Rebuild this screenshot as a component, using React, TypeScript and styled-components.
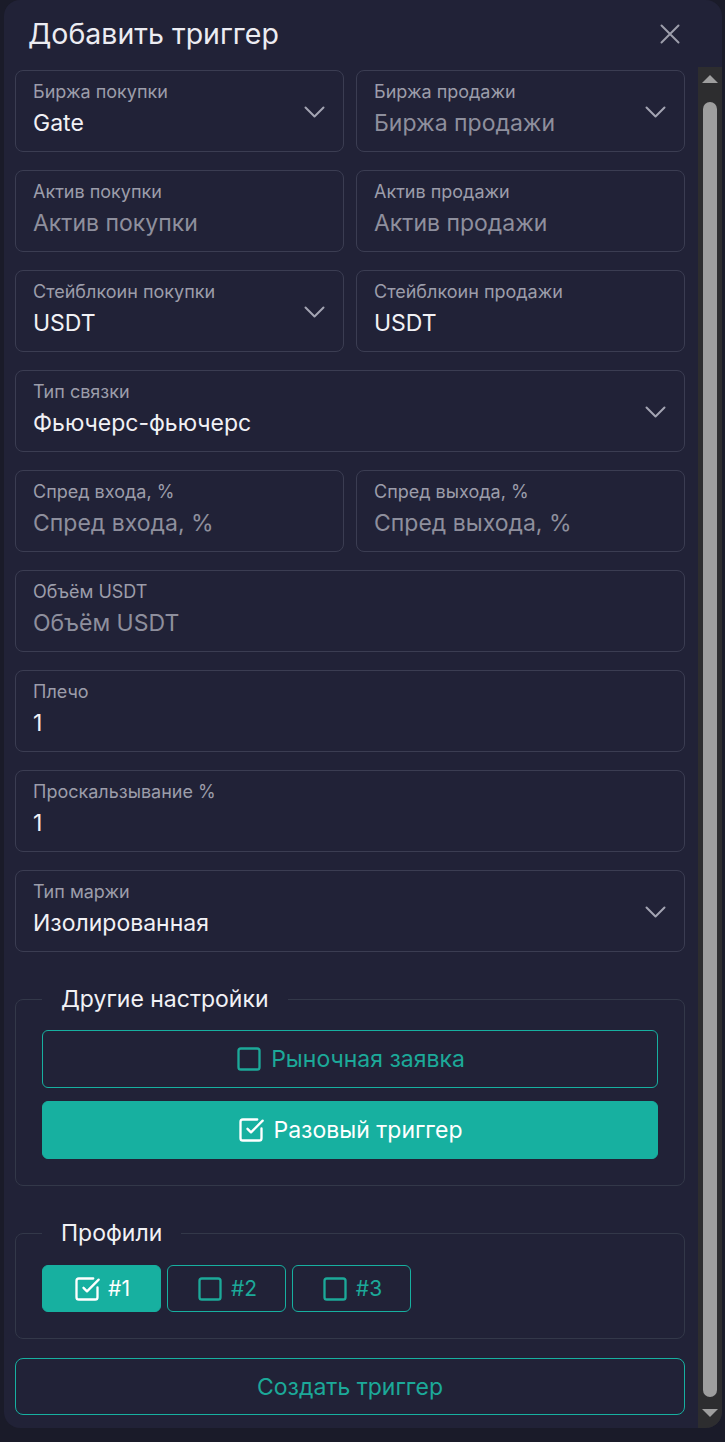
import React from 'react';
import styled, { createGlobalStyle } from 'styled-components';
import { Square, SquareCheckBig } from 'lucide-react';

const GlobalStyle = createGlobalStyle`
  html, body {
    margin: 0;
    padding: 0;
    background-color: #1a1b29;
    font-family: Inter, "Noto Sans", sans-serif;
  }
  * {
    box-sizing: border-box;
  }
`;

const teal = '#17b0a0';
const tealText = '#1ca999';
const barGray = '#9e9e9e';

const Modal = styled.div`
  margin-left: 4px;
  width: 718px;
  height: 1428px;
  background-color: #212237;
  border-radius: 16px;
  display: flex;
  flex-direction: column;
  overflow: hidden;
`;

const Header = styled.div`
  height: 67px;
  flex-shrink: 0;
  display: flex;
  align-items: center;
  justify-content: space-between;
  padding: 0 42px 0 24px;
`;

const Title = styled.h2`
  margin: 0;
  font-size: 28.5px;
  font-weight: 400;
  color: #ececf2;
`;

const CloseButton = styled.button`
  border: none;
  background: transparent;
  padding: 0;
  width: 20px;
  height: 20px;
  display: flex;
  align-items: center;
  justify-content: center;
  cursor: pointer;
`;

const Body = styled.div`
  flex: 1;
  min-height: 0;
  display: flex;
`;

const Content = styled.div`
  flex: 1;
  min-width: 0;
  overflow: hidden;
  padding: 3px 13px 44px 11px;
`;

/* scrollbar column drawn by hand: the headless browser hides native bars */
const ScrollTrack = styled.div`
  width: 24px;
  flex-shrink: 0;
  background-color: #2d2d2f;
  display: flex;
  flex-direction: column;
  align-items: center;
  padding: 8px 0 11px;
`;

const Arrow = styled.div<{ $down?: boolean }>`
  width: 0;
  height: 0;
  border-left: 8px solid transparent;
  border-right: 8px solid transparent;
  ${(p) =>
    p.$down
      ? `border-top: 8px solid ${barGray};`
      : `border-bottom: 8px solid ${barGray};`}
`;

const Thumb = styled.div`
  flex: 1;
  width: 14px;
  margin: 19px 0 12px;
  border-radius: 7px;
  background-color: ${barGray};
`;

const FieldGrid = styled.div`
  display: grid;
  grid-template-columns: 1fr 1fr;
  column-gap: 12px;
  row-gap: 18px;
`;

const Field = styled.div<{ $wide?: boolean }>`
  position: relative;
  grid-column: ${(p) => (p.$wide ? 'span 2' : 'auto')};
  height: 82px;
  border: 1px solid #3b3d52;
  border-radius: 8px;
  padding: 10px 17px 0 17px;
  display: flex;
  flex-direction: column;
  gap: 6px;
`;

const Label = styled.div`
  font-size: 18px;
  line-height: 22px;
  color: #9c9daa;
`;

const Value = styled.div<{ $placeholder?: boolean }>`
  font-size: 23px;
  line-height: 28px;
  color: ${(p) => (p.$placeholder ? '#8e8f9d' : '#f1f1f5')};
`;

const Chevron = styled.svg`
  position: absolute;
  right: 18px;
  top: 35px;
`;

const Group = styled.fieldset`
  margin: 33px 0 0 0;
  padding: 0 26px;
  min-inline-size: 0;
  border: 1px solid #333849;
  border-radius: 8px;
`;

const GroupTitle = styled.legend`
  padding: 0 19px;
  font-size: 23px;
  line-height: 28px;
  color: #f1f1f5;
`;

const OptionList = styled.div`
  display: flex;
  flex-direction: column;
  gap: 13px;
  padding: 17px 0 26px;
`;

const ProfileRow = styled.div`
  display: flex;
  gap: 6px;
  padding: 18px 0 26px;
`;

const ToggleButton = styled.button<{ $active?: boolean; $small?: boolean }>`
  height: ${(p) => (p.$small ? '47px' : '58px')};
  width: ${(p) => (p.$small ? '119px' : '100%')};
  border-radius: 6px;
  border: 1px solid ${teal};
  background-color: ${(p) => (p.$active ? teal : 'transparent')};
  color: ${(p) => (p.$active ? '#ffffff' : tealText)};
  font-family: inherit;
  font-size: ${(p) => (p.$small ? '21px' : '23px')};
  display: flex;
  align-items: center;
  justify-content: center;
  gap: ${(p) => (p.$small ? '7px' : '8px')};
  padding: 0;
  cursor: pointer;
`;

const SubmitButton = styled.button`
  margin-top: 19px;
  width: 100%;
  height: 57px;
  border: 1px solid ${teal};
  border-radius: 8px;
  background: transparent;
  color: ${tealText};
  font-family: inherit;
  font-size: 23px;
  cursor: pointer;
`;

const ChevronIcon = () => (
  <Chevron width="21" height="13" viewBox="0 0 21 13" fill="none">
    <polyline points="1.5,1.5 10.5,10.5 19.5,1.5" stroke="#a3a4b2" strokeWidth="2" strokeLinecap="round" strokeLinejoin="round" />
  </Chevron>
);

type FieldDef = {
  label: string;
  value: string;
  placeholder?: boolean;
  select?: boolean;
  wide?: boolean;
};

const fields: FieldDef[] = [
  { label: 'Биржа покупки', value: 'Gate', select: true },
  { label: 'Биржа продажи', value: 'Биржа продажи', placeholder: true, select: true },
  { label: 'Актив покупки', value: 'Актив покупки', placeholder: true },
  { label: 'Актив продажи', value: 'Актив продажи', placeholder: true },
  { label: 'Стейблкоин покупки', value: 'USDT', select: true },
  { label: 'Стейблкоин продажи', value: 'USDT' },
  { label: 'Тип связки', value: 'Фьючерс-фьючерс', select: true, wide: true },
  { label: 'Спред входа, %', value: 'Спред входа, %', placeholder: true },
  { label: 'Спред выхода, %', value: 'Спред выхода, %', placeholder: true },
  { label: 'Объём USDT', value: 'Объём USDT', placeholder: true, wide: true },
  { label: 'Плечо', value: '1', wide: true },
  { label: 'Проскальзывание %', value: '1', wide: true },
  { label: 'Тип маржи', value: 'Изолированная', select: true, wide: true }
];

const options = [
  { label: 'Рыночная заявка', checked: false },
  { label: 'Разовый триггер', checked: true }
];

const profiles = [
  { label: '#1', checked: true },
  { label: '#2', checked: false },
  { label: '#3', checked: false }
];

const CheckIcon = ({ checked, size }: { checked: boolean; size: number }) =>
  checked ? <SquareCheckBig size={size} strokeWidth={2} /> : <Square size={size} strokeWidth={2} />;

export default function App() {
  return (
    <>
      <GlobalStyle />
      <Modal>
        <Header>
          <Title>Добавить триггер</Title>
          <CloseButton aria-label="close">
            <svg width="20" height="20" viewBox="0 0 20 20">
              <path d="M1.5 1.5 18.5 18.5 M18.5 1.5 1.5 18.5" stroke="#9d9eab" strokeWidth="2" strokeLinecap="round" />
            </svg>
          </CloseButton>
        </Header>
        <Body>
          <Content>
            <FieldGrid>
              {fields.map((f, idx) => (
                <Field key={idx} $wide={f.wide}>
                  <Label>{f.label}</Label>
                  <Value $placeholder={f.placeholder}>{f.value}</Value>
                  {f.select && <ChevronIcon />}
                </Field>
              ))}
            </FieldGrid>

            <Group>
              <GroupTitle>Другие настройки</GroupTitle>
              <OptionList>
                {options.map((o) => (
                  <ToggleButton key={o.label} $active={o.checked}>
                    <CheckIcon checked={o.checked} size={28} />
                    {o.label}
                  </ToggleButton>
                ))}
              </OptionList>
            </Group>

            <Group>
              <GroupTitle>Профили</GroupTitle>
              <ProfileRow>
                {profiles.map((p) => (
                  <ToggleButton key={p.label} $active={p.checked} $small>
                    <CheckIcon checked={p.checked} size={28} />
                    {p.label}
                  </ToggleButton>
                ))}
              </ProfileRow>
            </Group>

            <SubmitButton>Создать триггер</SubmitButton>
          </Content>
          <ScrollTrack>
            <Arrow />
            <Thumb />
            <Arrow $down />
          </ScrollTrack>
        </Body>
      </Modal>
    </>
  );
}
